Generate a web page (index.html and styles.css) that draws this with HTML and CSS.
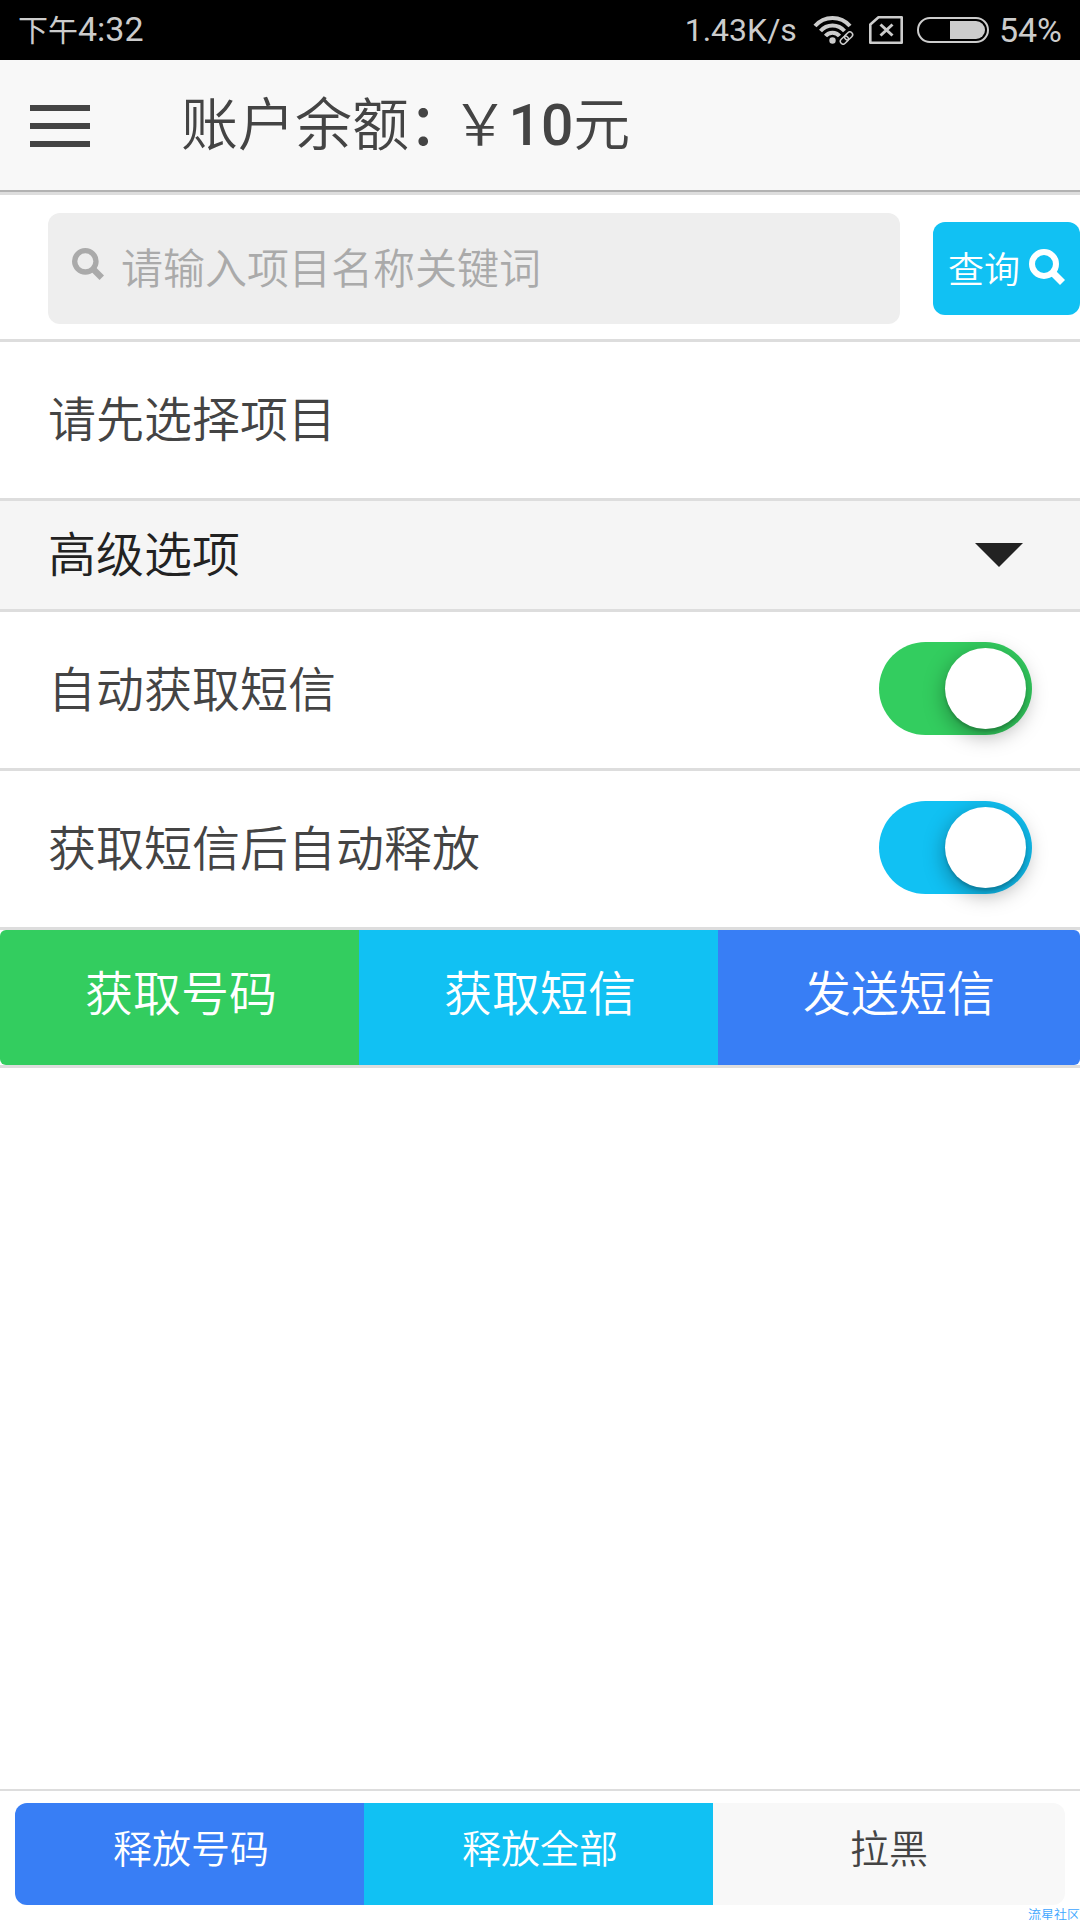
FILE: index.html
```html
<!DOCTYPE html>
<html lang="zh-CN">
<head>
<meta charset="utf-8">
<meta name="viewport" content="width=device-width, initial-scale=1">
<title>账户余额</title>
<link rel="stylesheet" href="styles.css">
</head>
<body>
<div class="status">
  <span class="status-time"><span class="status-period">下午</span>4:32</span>
  <div class="status-info">
    <span class="status-speed">1.43K/s</span>
    <svg class="icon-wifi" width="42" height="30" viewBox="0 0 42 30" fill="none" stroke="#ccc" aria-hidden="true">
      <path stroke-width="4" d="M2 11A23 23 0 0 1 37 11M7.500 16A16 16 0 0 1 31.500 16M12.500 21A9 9 0 0 1 26.500 21"/>
      <circle cx="19.500" cy="25.500" r="3.200" fill="#ccc" stroke="none"/>
      <g transform="rotate(-45 33.500 23)">
        <rect x="24" y="18" width="19" height="10" rx="5" fill="#000" stroke="none"/>
        <rect x="26" y="20.200" width="9" height="5.600" rx="2.800" stroke-width="1.500"/>
        <rect x="32" y="20.200" width="9" height="5.600" rx="2.800" stroke-width="1.500"/>
      </g>
    </svg>
    <svg class="icon-sim" width="34" height="28" viewBox="0 0 34 28" fill="none" stroke="#ccc" aria-hidden="true">
      <path stroke-width="2.600" stroke-linejoin="round" d="M9.500 1.300H32.700V26.700H1.300V8.500Z"/>
      <path stroke-width="3" d="M11.500 8.500L23.500 19.500M23.500 8.500L11.500 19.500"/>
    </svg>
    <svg class="icon-battery" width="72" height="26" viewBox="0 0 72 26" fill="none" stroke="#ccc" aria-hidden="true">
      <rect x="1" y="1" width="70" height="24" rx="12" stroke-width="2"/>
      <path fill="#ccc" stroke="none" d="M33 4H59A9 9 0 0 1 59 22H33Z"/>
    </svg>
    <span>54%</span>
  </div>
</div>

<header class="header">
  <button class="menu" type="button" aria-label="菜单"><span></span><span></span><span></span></button>
  <h1 class="title">账户余额<span class="title-colon">：</span>￥<span class="title-amount">10</span>元</h1>
</header>

<main class="content">
  <form class="search">
    <label class="search-box">
      <svg class="search-icon" width="32" height="32" viewBox="0 0 36 36" fill="none" stroke="currentColor" aria-hidden="true">
        <circle cx="15" cy="15" r="12" stroke-width="6"/><path stroke-width="7" d="M22 22L33.500 33.500"/>
      </svg>
      <input class="search-input" type="text" placeholder="请输入项目名称关键词" aria-label="项目名称关键词">
    </label>
    <button class="search-button" type="button">查询
      <svg width="36" height="36" viewBox="0 0 36 36" fill="none" stroke="currentColor" aria-hidden="true">
        <circle cx="15" cy="15" r="12" stroke-width="6"/><path stroke-width="7" d="M22 22L33.500 33.500"/>
      </svg>
    </button>
  </form>
  <div class="row">请先选择项目</div>
  <button class="row row-divider" type="button">高级选项<span class="caret"></span></button>
  <label class="row">自动获取短信<input class="toggle toggle-green" type="checkbox" checked></label>
  <label class="row">获取短信后自动释放<input class="toggle toggle-cyan" type="checkbox" checked></label>
  <div class="bar">
    <button class="bar-button green" type="button">获取号码</button>
    <button class="bar-button cyan" type="button">获取短信</button>
    <button class="bar-button blue" type="button">发送短信</button>
  </div>
</main>

<footer class="footer">
  <div class="bar bar-small">
    <button class="bar-button blue" type="button">释放号码</button>
    <button class="bar-button cyan" type="button">释放全部</button>
    <button class="bar-button light" type="button">拉黑</button>
  </div>
  <span class="watermark">流星社区</span>
</footer>
</body>
</html>
```

FILE: styles.css
```css
* {
  box-sizing: border-box;
}

body {
  margin: 0;
  min-height: 100vh;
  display: flex;
  flex-direction: column;
  background: #fff;
  color: #444;
  font-family: "Noto Sans CJK SC", sans-serif;
  font-weight: 350;
  font-size: 48px;
  line-height: 72px;
}

button,
input {
  margin: 0;
  border: 0;
  padding: 0;
  background: none;
  color: inherit;
  font: inherit;
}

svg {
  display: block;
  flex: none;
}

.status {
  display: flex;
  align-items: center;
  justify-content: space-between;
  height: 60px;
  padding: 0 18px;
  background: #000;
  color: #ccc;
  font-family: Roboto, "Noto Sans CJK SC", sans-serif;
  font-weight: 400;
  font-size: 34px;
  line-height: 60px;
}

.status-period {
  font-size: 30px;
}

.status-info {
  display: flex;
  align-items: center;
}

.status-speed {
  margin-right: 16px;
  font-size: 32px;
}

.icon-wifi,
.icon-sim {
  margin-right: 14px;
}

.icon-battery {
  margin-right: 10px;
}

.header {
  display: flex;
  align-items: center;
  gap: 91px;
  height: 132px;
  padding: 2px 30px 0;
  background: #f8f8f8;
  border-bottom: 2px solid #b2b2b2;
}

.menu {
  display: flex;
  flex-direction: column;
  gap: 12px;
  width: 60px;
}

.menu span {
  height: 6px;
  background: #444;
}

.title {
  margin: 0;
  padding-bottom: 6px;
  font-size: 57px;
  font-weight: 350;
  line-height: 80px;
}

.title-colon {
  padding-right: 14px;
  font-feature-settings: "halt";
  font-weight: 500;
}

.title-amount {
  font-family: Roboto, sans-serif;
  font-weight: 500;
}

.content {
  flex: 1;
  border-top: 3px solid #ddd;
}

.search {
  display: flex;
  align-items: center;
  gap: 33px;
  padding: 18px 0 15px 48px;
  border-bottom: 3px solid #ddd;
}

.search-box {
  flex: 1;
  display: flex;
  align-items: center;
  gap: 17px;
  height: 111px;
  padding: 0 24px 6px;
  border-radius: 12px;
  background: #eee;
  color: #aaa;
}

.search-icon {
  margin-bottom: 4px;
}

.search-input {
  flex: 1;
  min-width: 0;
  outline: none;
  color: #444;
  font-size: 42px;
  line-height: 64px;
}

.search-input::placeholder {
  color: #aaa;
  opacity: 1;
}

.search-button {
  display: flex;
  align-items: center;
  gap: 9px;
  height: 93px;
  padding: 0 15px 3px;
  border-radius: 12px;
  background: #11c1f3;
  color: #fff;
  font-size: 36px;
  line-height: 54px;
}

.row {
  display: flex;
  align-items: center;
  justify-content: space-between;
  width: 100%;
  height: 159px;
  padding: 0 48px 8px;
  border-bottom: 3px solid #ddd;
}

.row-divider {
  height: 111px;
  padding-right: 57px;
  background: #f5f5f5;
  color: #222;
}

.caret {
  margin-top: 8px;
  border: 24px solid transparent;
  border-top-color: #222;
  border-bottom-width: 0;
}

.toggle {
  appearance: none;
  display: flex;
  justify-content: flex-end;
  width: 153px;
  height: 93px;
  margin-top: 4px;
  padding: 6px;
  border-radius: 48px;
}

.toggle::before {
  content: "";
  width: 81px;
  border-radius: 50%;
  background: #fff;
  box-shadow: 0 6px 21px rgba(0, 0, 0, .35), 0 3px 3px rgba(0, 0, 0, .15);
}

.toggle:not(:checked) {
  justify-content: flex-start;
  background: #ddd;
}

.bar {
  display: flex;
  border-bottom: 3px solid #ddd;
}

.bar-button {
  flex: 1;
  height: 135px;
  padding-bottom: 16px;
}

.bar-button + .bar-button {
  margin-left: -3px;
}

.bar-button:first-child {
  border-radius: 6px 0 0 6px;
}

.bar-button:last-child {
  border-radius: 0 6px 6px 0;
}

.bar-small {
  border: 0;
  border-radius: 12px;
  overflow: hidden;
}

.bar-small .bar-button {
  height: 102px;
  font-size: 39px;
}

.green,
.toggle-green {
  background: #33cd5f;
}

.cyan,
.toggle-cyan {
  background: #11c1f3;
}

.green,
.cyan,
.blue {
  color: #fff;
}

.blue {
  background: #387ef5;
}

.light {
  background: #f8f8f8;
}

.footer {
  position: relative;
  padding: 12px 15px 15px;
  border-top: 2px solid #ddd;
}

.watermark {
  position: absolute;
  right: 0;
  bottom: 0;
  color: #3ea6ff;
  font-size: 13px;
  line-height: 12px;
}
```
